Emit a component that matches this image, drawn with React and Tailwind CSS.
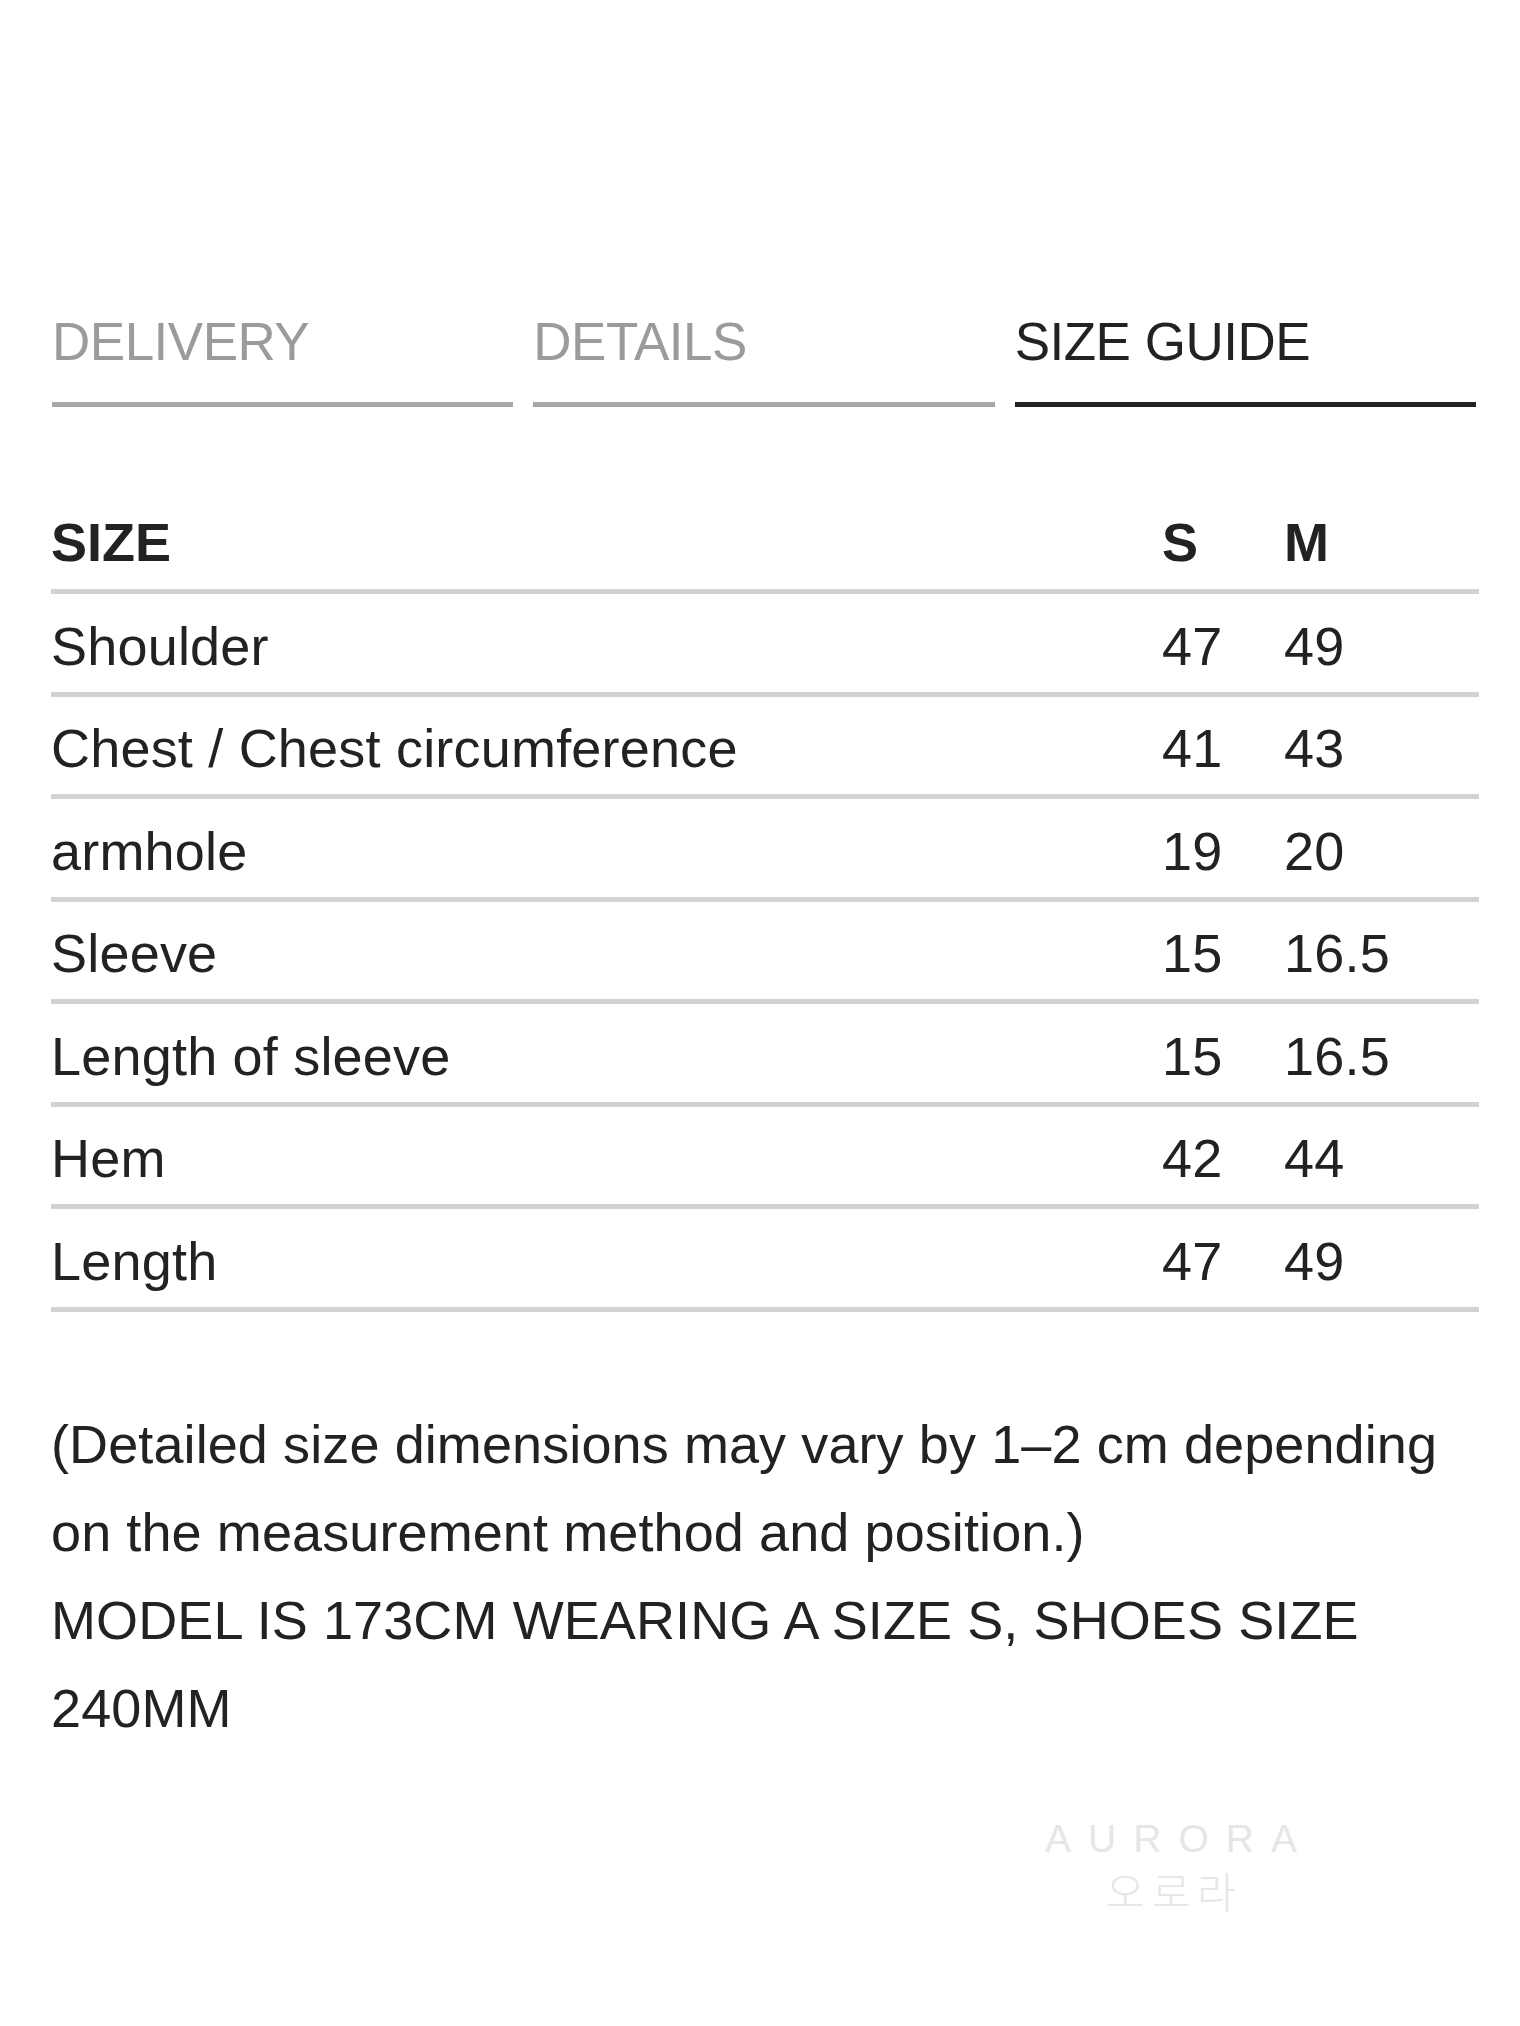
const tabs = [
  { label: 'DELIVERY', active: false },
  { label: 'DETAILS', active: false },
  { label: 'SIZE GUIDE', active: true },
];

const rows = [
  { name: 'Shoulder', s: '47', m: '49' },
  { name: 'Chest / Chest circumference', s: '41', m: '43' },
  { name: 'armhole', s: '19', m: '20' },
  { name: 'Sleeve', s: '15', m: '16.5' },
  { name: 'Length of sleeve', s: '15', m: '16.5' },
  { name: 'Hem', s: '42', m: '44' },
  { name: 'Length', s: '47', m: '49' },
];

export default function App() {
  return (
    <div className="min-h-[2026px] w-full bg-white pl-[51px] pt-[315px] font-['Liberation_Sans',Arial,sans-serif] text-[#222]">
      {/* tabs */}
      <div className="ml-px flex w-[1424px] gap-[20px]">
        {tabs.map((tab) => (
          <div
            key={tab.label}
            className={`flex-1 border-b-[5px] pb-[34px] text-[53px] leading-none tracking-[-0.5px] ${
              tab.active ? 'border-[#222] text-[#222]' : 'border-[#a8a8a8] text-[#9b9b9b]'
            }`}
          >
            {tab.label}
          </div>
        ))}
      </div>

      {/* size table */}
      <div className="mt-[108px] w-[1428px]">
        <div className="flex border-b-[5px] border-[#d2d2d2] pb-[20px] text-[54px] font-bold leading-none">
          <div className="flex-1">SIZE</div>
          <div className="w-[122px]">S</div>
          <div className="w-[195px]">M</div>
        </div>
        {rows.map((row) => (
          <div
            key={row.name}
            className="flex h-[102.5px] items-center border-b-[5px] border-[#d2d2d2] pt-[6px] text-[54px] leading-none tracking-[0.2px]"
          >
            <div className="flex-1">{row.name}</div>
            <div className="w-[122px]">{row.s}</div>
            <div className="w-[195px]">{row.m}</div>
          </div>
        ))}
      </div>

      {/* notes */}
      <div className="mt-[88px] w-[1428px] text-[54px] leading-[88px] tracking-[0.1px]">
        <p>(Detailed size dimensions may vary by 1–2 cm depending on the measurement method and position.)</p>
        <p>MODEL IS 173CM WEARING A SIZE S, SHOES SIZE 240MM</p>
      </div>

      {/* watermark */}
      <div className="ml-[960px] mt-[67px] w-[320px] text-center text-[#e6e6e6]">
        <div className="pl-[17px] text-[39px] leading-none tracking-[17px]">AURORA</div>
        <div className="mt-[11px] pl-[7px] font-['Noto_Sans_CJK_KR',sans-serif] text-[42px] font-light leading-none tracking-[7px]">
          오로라
        </div>
      </div>
    </div>
  );
}
